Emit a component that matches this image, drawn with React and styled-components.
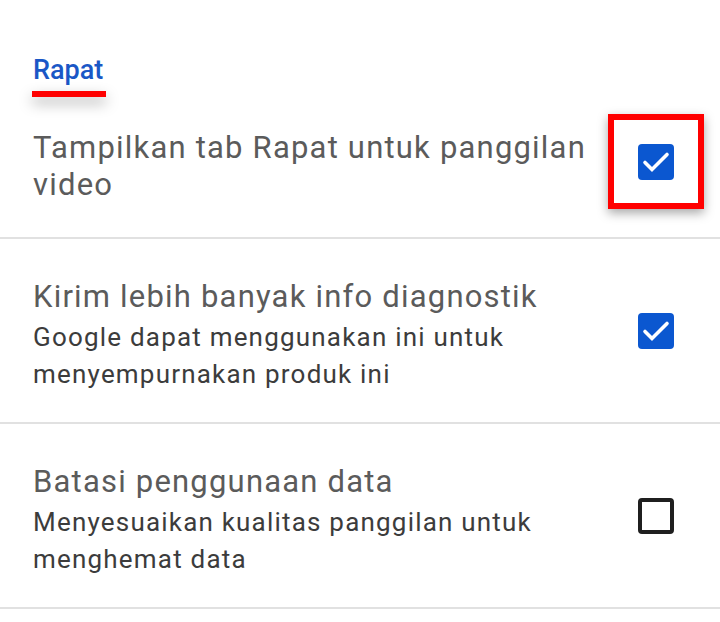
import styled, { createGlobalStyle } from "styled-components";

const GlobalStyle = createGlobalStyle`
  html, body {
    margin: 0;
    padding: 0;
    background: #ffffff;
  }
  body {
    font-family: Roboto, "Noto Sans", sans-serif;
  }
`;

const Page = styled.div`
  width: 720px;
  height: 622px;
  overflow: hidden;
  background: #ffffff;
`;

const Header = styled.div`
  padding: 52px 33px 0;
  display: flex;
  flex-direction: column;
  align-items: flex-start;
`;

const SectionTitle = styled.div`
  font-size: 27px;
  line-height: 36px;
  font-weight: 500;
  color: #1a57c6;
`;

const Underline = styled.div`
  width: 74px;
  height: 6px;
  margin-top: 3px;
  margin-left: -1px;
  background: #ff0000;
  box-shadow: 0 6px 14px rgba(0, 0, 0, 0.35);
`;

const Row = styled.div`
  display: flex;
  align-items: center;
  justify-content: space-between;
  padding: ${({ $top }) => $top}px 46px ${({ $bottom }) => $bottom}px 33px;
  border-bottom: 2px solid #e1e1e1;
`;

const Texts = styled.div`
  display: flex;
  flex-direction: column;
  max-width: 575px;
  padding-top: ${({ $shift }) => $shift || 0}px;
`;

const Title = styled.div`
  font-size: 31px;
  line-height: 37px;
  letter-spacing: 1.2px;
  color: #5b5b5b;
`;

const Subtitle = styled.div`
  font-size: 26px;
  line-height: 37px;
  letter-spacing: 1.2px;
  color: #3c3c3c;
  margin-top: 4px;
`;

const CheckCell = styled.div`
  display: flex;
  padding-bottom: 9px;
`;

const Highlight = styled.div`
  display: flex;
  align-items: center;
  justify-content: center;
  box-sizing: border-box;
  width: 96px;
  height: 95px;
  margin-right: -30px;
  border: 6px solid #ff0000;
  box-shadow: 0 4px 10px rgba(0, 0, 0, 0.35);
  background: #ffffff;
`;

const Box = styled.div`
  width: 36px;
  height: 36px;
  box-sizing: border-box;
  border-radius: 4px;
  background: ${({ $checked }) => ($checked ? "#0b57d0" : "transparent")};
  border: ${({ $checked }) => ($checked ? "none" : "4px solid #1f1f1f")};

  svg {
    display: block;
  }
`;

function Checkbox({ checked }) {
  return (
    <Box $checked={checked}>
      {checked && (
        <svg width="36" height="36" viewBox="0 0 36 36">
          <path
            d="M7 18.5l7 7L29 10.5"
            fill="none"
            stroke="#ffffff"
            strokeWidth="3.6"
            strokeLinecap="round"
            strokeLinejoin="miter"
          />
        </svg>
      )}
    </Box>
  );
}

export default function App() {
  return (
    <Page>
      <GlobalStyle />
      <Header>
        <SectionTitle>Rapat</SectionTitle>
        <Underline />
      </Header>
      <Row $top={17} $bottom={28}>
        <Texts $shift={9}>
          <Title>Tampilkan tab Rapat untuk panggilan video</Title>
        </Texts>
        <Highlight>
          <Checkbox checked />
        </Highlight>
      </Row>
      <Row $top={39} $bottom={29}>
        <Texts>
          <Title>Kirim lebih banyak info diagnostik</Title>
          <Subtitle>Google dapat menggunakan ini untuk menyempurnakan produk ini</Subtitle>
        </Texts>
        <CheckCell>
          <Checkbox checked />
        </CheckCell>
      </Row>
      <Row $top={39} $bottom={29}>
        <Texts>
          <Title>Batasi penggunaan data</Title>
          <Subtitle>Menyesuaikan kualitas panggilan untuk menghemat data</Subtitle>
        </Texts>
        <CheckCell>
          <Checkbox />
        </CheckCell>
      </Row>
    </Page>
  );
}
